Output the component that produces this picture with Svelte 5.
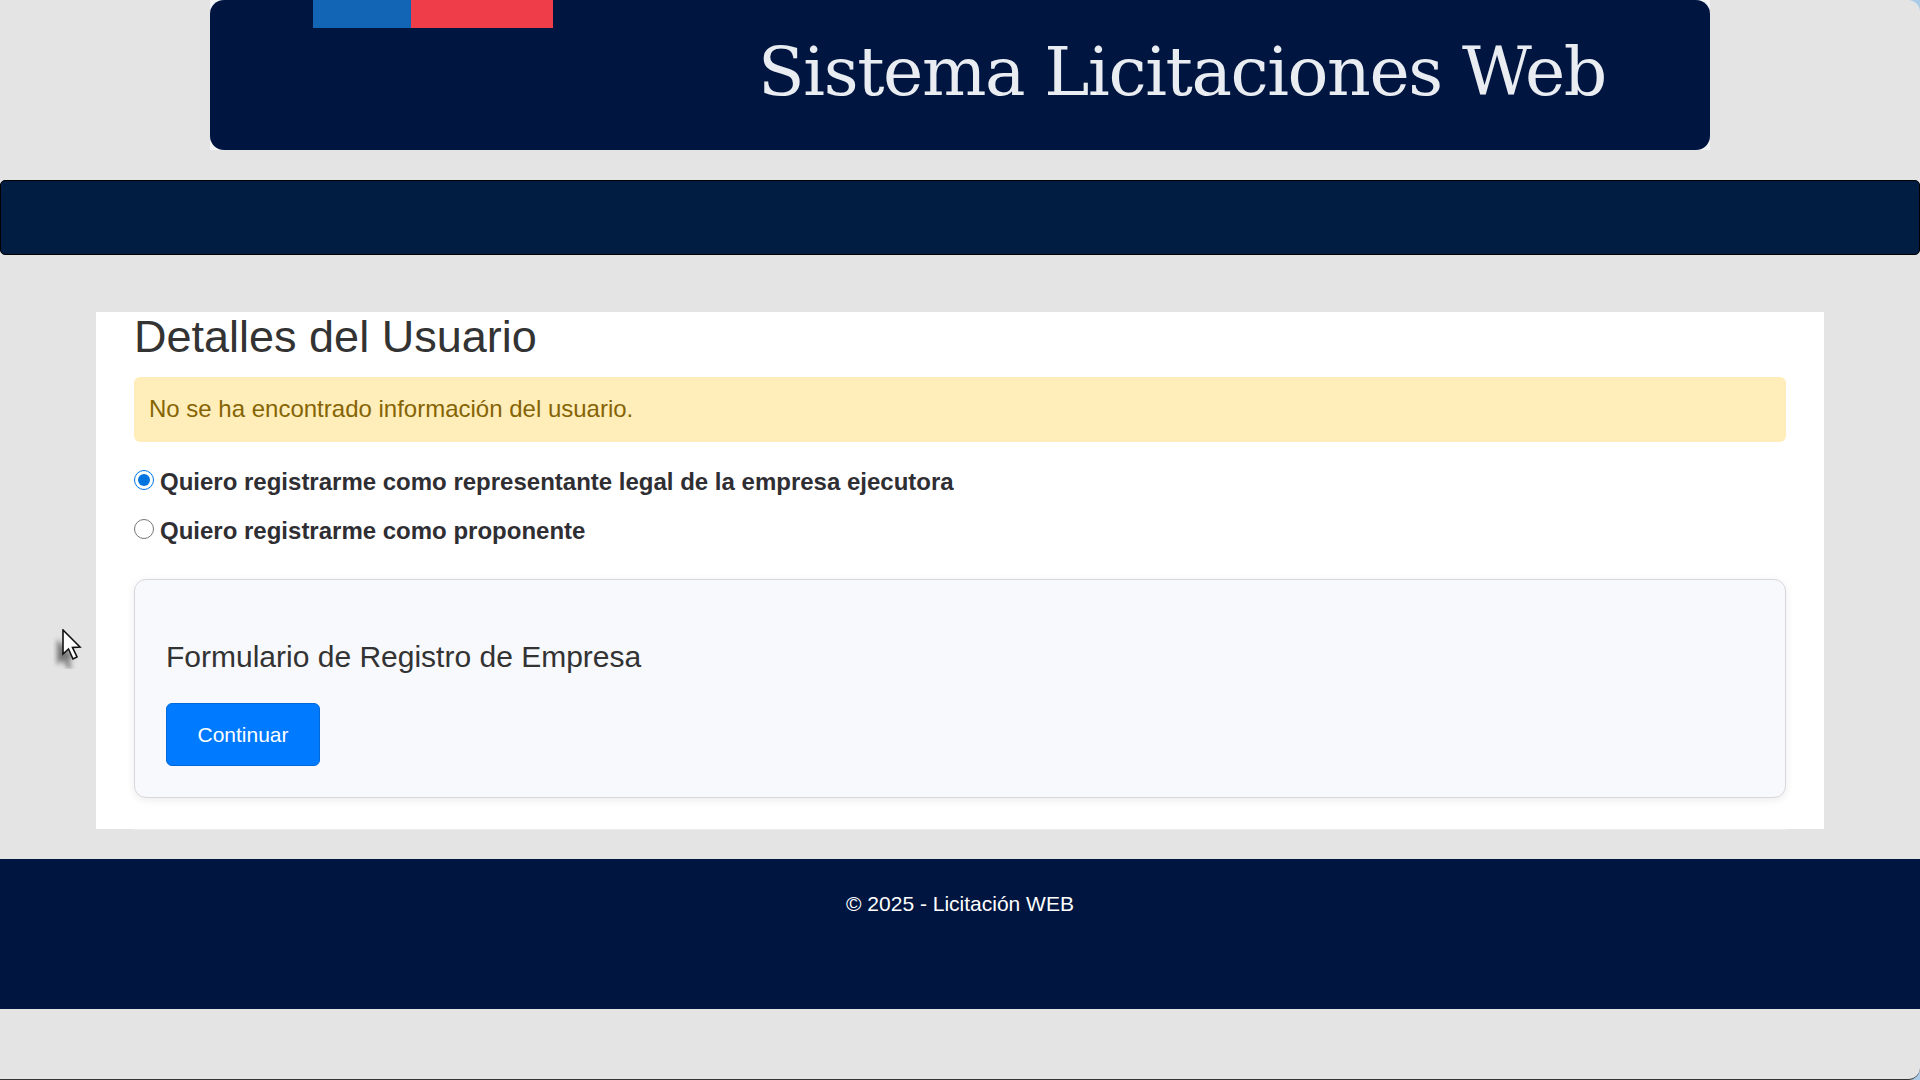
<script>
	let tipo = $state("legal");
</script>

<div class="pagina">
	<header class="banner">
		<div class="imagen">
			<div class="bandera">
				<span class="azul"></span>
				<span class="rojo"></span>
			</div>
			<div class="titulo">Sistema Licitaciones Web</div>
		</div>
	</header>

	<nav class="barra"></nav>

	<main class="contenido">
		<h2>Detalles del Usuario</h2>
		<div class="alerta">No se ha encontrado información del usuario.</div>

		<label class="opcion">
			<input type="radio" bind:group={tipo} value="legal" />
			<span>Quiero registrarme como representante legal de la empresa ejecutora</span>
		</label>
		<label class="opcion">
			<input type="radio" bind:group={tipo} value="proponente" />
			<span>Quiero registrarme como proponente</span>
		</label>

		<section class="tarjeta">
			<h4>Formulario de Registro de Empresa</h4>
			<button type="button">Continuar</button>
		</section>
		<div class="linea"></div>
	</main>

	<footer class="pie">© 2025 - Licitación WEB</footer>

	<svg class="cursor" width="30" height="40" viewBox="0 0 30 40">
		<path class="sombra" d="M4 10 L4 36 L10 31 L15 40 L19 38 L15 30 L22 29 Z" />
		<path class="flecha" d="M10 1 L10 25 L15.5 20 L20 30 L24 28 L19.5 18.5 L27 18 Z" />
	</svg>
</div>

<style>
	:global(body) {
		margin: 0;
		background: #a9cbe8;
		font-family: "Liberation Sans", Arial, sans-serif;
		color: #333;
	}
	.pagina {
		position: relative;
		height: 1080px;
		overflow: hidden;
		box-sizing: border-box;
		background: #e4e4e4;
		border-bottom: 1px solid #333;
		border-radius: 0 12px 12px 0;
	}
	.banner {
		height: 150px;
		margin: 0 210px;
		background: #f4f5f7;
	}
	.imagen {
		display: flex;
		justify-content: flex-end;
		align-items: center;
		height: 100%;
		padding: 0 104px 8px 0;
		box-sizing: border-box;
		background: #001641;
		border-radius: 14px;
		position: relative;
	}
	.bandera {
		position: absolute;
		left: 103px;
		top: 0;
		display: flex;
		height: 28px;
	}
	.azul {
		width: 98px;
		background: #1264b4;
	}
	.rojo {
		width: 142px;
		background: #ef3e4a;
	}
	.titulo {
		font-family: "DejaVu Serif", serif;
		font-size: 68px;
		color: #e9edf2;
		white-space: nowrap;
		letter-spacing: -1.4px;
	}
	.barra {
		height: 75px;
		margin-top: 30px;
		box-sizing: border-box;
		background: #011d42;
		border: 1px solid #000;
		border-radius: 5px;
	}
	.contenido {
		margin: 57px 96px 0;
		height: 517px;
		padding: 0 38px;
		box-sizing: border-box;
		background: #fff;
	}
	h2 {
		margin: 0;
		padding-bottom: 15px;
		font-size: 45px;
		font-weight: 400;
		line-height: 50px;
	}
	.alerta {
		height: 65px;
		padding: 0 15px 2px;
		box-sizing: border-box;
		display: flex;
		align-items: center;
		background: #ffeeba;
		border-radius: 6px;
		color: #856404;
		font-size: 24px;
	}
	.opcion {
		display: flex;
		align-items: center;
		gap: 6px;
		height: 30px;
		margin-top: 19px;
		font-size: 24px;
		font-weight: 700;
		color: #2e2e33;
		white-space: nowrap;
	}
	.alerta + .opcion {
		margin-top: 25px;
	}
	input[type="radio"] {
		width: 20px;
		height: 20px;
		margin: 0 0 4px;
		accent-color: #0075e0;
	}
	.tarjeta {
		height: 219px;
		margin-top: 33px;
		padding: 59px 31px 0;
		box-sizing: border-box;
		background: #f8f9fc;
		border: 1px solid #d8d8dc;
		border-radius: 12px;
		box-shadow: 0 2px 8px rgba(0, 0, 0, 0.08);
	}
	h4 {
		margin: 0 0 28px;
		font-size: 30px;
		font-weight: 400;
		line-height: 36px;
	}
	button {
		display: block;
		width: 154px;
		height: 63px;
		padding: 0;
		background: #007bff;
		border: 1px solid #0069d9;
		border-radius: 6px;
		color: #fff;
		font: 400 21px "Liberation Sans", Arial, sans-serif;
	}
	.linea {
		height: 1px;
		margin-top: 31px;
		background: #ececec;
	}
	.pie {
		margin-top: 30px;
		height: 150px;
		padding-top: 32px;
		box-sizing: border-box;
		background: #001641;
		color: #fff;
		font-size: 21px;
		line-height: 26px;
		text-align: center;
	}
	.cursor {
		position: absolute;
		left: 53px;
		top: 629px;
	}
	.sombra {
		fill: #555;
		opacity: 0.75;
		filter: blur(2.5px);
	}
	.flecha {
		fill: #fff;
		stroke: #111;
		stroke-width: 1.6;
	}
</style>
